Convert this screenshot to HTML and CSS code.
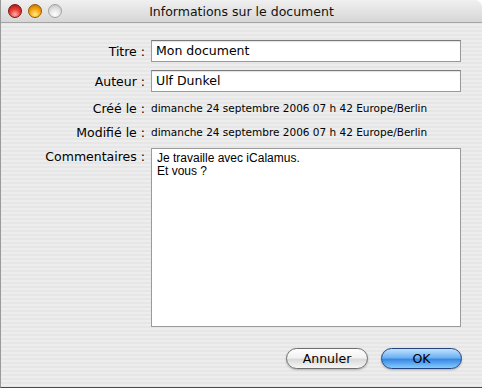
FILE: index.html
```html
<!doctype html>
<html lang="fr">

<head>
    <title>Informations sur le document</title>
    <meta charset="utf-8">
    <link rel="stylesheet" href="styles.css">
</head>

<body>
    <div class="fenetre">
        <div class="titrebarre">
            <div class="feux">
                <span class="feu rouge"></span>
                <span class="feu orange"></span>
                <span class="feu gris"></span>
            </div>
            <div class="titre">Informations sur le document</div>
        </div>

        <div class="contenu">
            <div class="formulaire">
                <label class="etiquette">Titre :</label>
                <div class="champ">Mon document</div>

                <label class="etiquette">Auteur :</label>
                <div class="champ">Ulf Dunkel</div>

                <label class="etiquette">Créé le :</label>
                <div class="date">dimanche 24 septembre 2006 07 h 42 Europe/Berlin</div>

                <label class="etiquette">Modifié le :</label>
                <div class="date">dimanche 24 septembre 2006 07 h 42 Europe/Berlin</div>

                <label class="etiquette haut">Commentaires :</label>
                <div class="commentaires">Je travaille avec iCalamus.<br>Et vous ?</div>
            </div>

            <div class="boutons">
                <button class="bouton">Annuler</button>
                <button class="bouton defaut">OK</button>
            </div>
        </div>
    </div>
</body>

</html>
```

FILE: styles.css
```css
body {
    margin: 0;
    background: #ffffff;
    font-family: 'DejaVu Sans', Verdana, sans-serif;
}

.fenetre {
    width: 482px;
    height: 388px;
    box-sizing: border-box;
    border-left: 1px solid #9a9a9a;
    border-bottom: 1px solid #4a4a4a;
    border-radius: 0 8px 0 0;
    overflow: hidden;
    background: repeating-linear-gradient(180deg, #ededed 0px, #ededed 2px, #e6e6e6 2px, #e6e6e6 4px);
}

.titrebarre {
    height: 23px;
    box-sizing: border-box;
    border-bottom: 1px solid #a4a4a4;
    background: linear-gradient(#f0f0f0, #d6d6d6);
    display: flex;
    align-items: center;
    position: relative;
}

.feux {
    display: flex;
    gap: 6px;
    padding-left: 7px;
}

.feu {
    width: 14px;
    height: 14px;
    border-radius: 50%;
    box-sizing: border-box;
}

.rouge {
    border: 1px solid #7a1414;
    background: radial-gradient(circle at 50% 78%, #ffb0a8 0%, #e8403a 45%, #a01010 100%);
}

.orange {
    border: 1px solid #945a00;
    background: radial-gradient(circle at 50% 78%, #ffec8a 0%, #f8aa14 45%, #b86800 100%);
}

.gris {
    border: 1px solid #a0a0a0;
    background: radial-gradient(circle at 50% 78%, #ffffff 0%, #e2e2e2 50%, #bcbcbc 100%);
}

.titre {
    position: absolute;
    left: 0;
    right: 0;
    top: 4px;
    text-align: center;
    font-size: 12.5px;
    color: #111;
}

.contenu {
    padding: 17px 20px 0 0;
}

.formulaire {
    display: grid;
    grid-template-columns: 144px 310px;
    grid-template-rows: 22px 22px 16px 16px 179px;
    column-gap: 6px;
    row-gap: 8px;
}

.etiquette {
    font-size: 12.5px;
    color: #000;
    text-align: right;
    align-self: center;
}

.etiquette.haut {
    align-self: start;
    padding-top: 1px;
}

.champ {
    background: #fff;
    border: 1px solid #9a9a9a;
    border-top-color: #7a7a7a;
    box-shadow: inset 0 1px 1px rgba(0, 0, 0, 0.12);
    font-size: 12.5px;
    padding: 0 4px;
    line-height: 20px;
}

.date {
    font-size: 10.5px;
    align-self: center;
}

.commentaires {
    background: #fff;
    border: 1px solid #9a9a9a;
    box-sizing: border-box;
    font-family: 'Liberation Sans', Arial, sans-serif;
    font-size: 12px;
    line-height: 13px;
    padding: 3px 5px;
}

.boutons {
    display: flex;
    justify-content: flex-end;
    gap: 13px;
    margin-top: 21px;
}

.bouton {
    width: 82px;
    height: 21px;
    border-radius: 11px;
    border: 1px solid #6e6e6e;
    background: linear-gradient(#ffffff 0%, #f2f2f2 45%, #dadada 55%, #f6f6f6 100%);
    box-shadow: 0 1px 2px rgba(0, 0, 0, 0.25);
    font-family: 'DejaVu Sans', Verdana, sans-serif;
    font-size: 12.5px;
    color: #000;
    padding: 0;
}

.bouton.defaut {
    width: 81px;
    border-color: #23427e;
    background: linear-gradient(#c0e2ff 0%, #6eb2f2 45%, #3a88e4 55%, #86ccff 100%);
}
```
